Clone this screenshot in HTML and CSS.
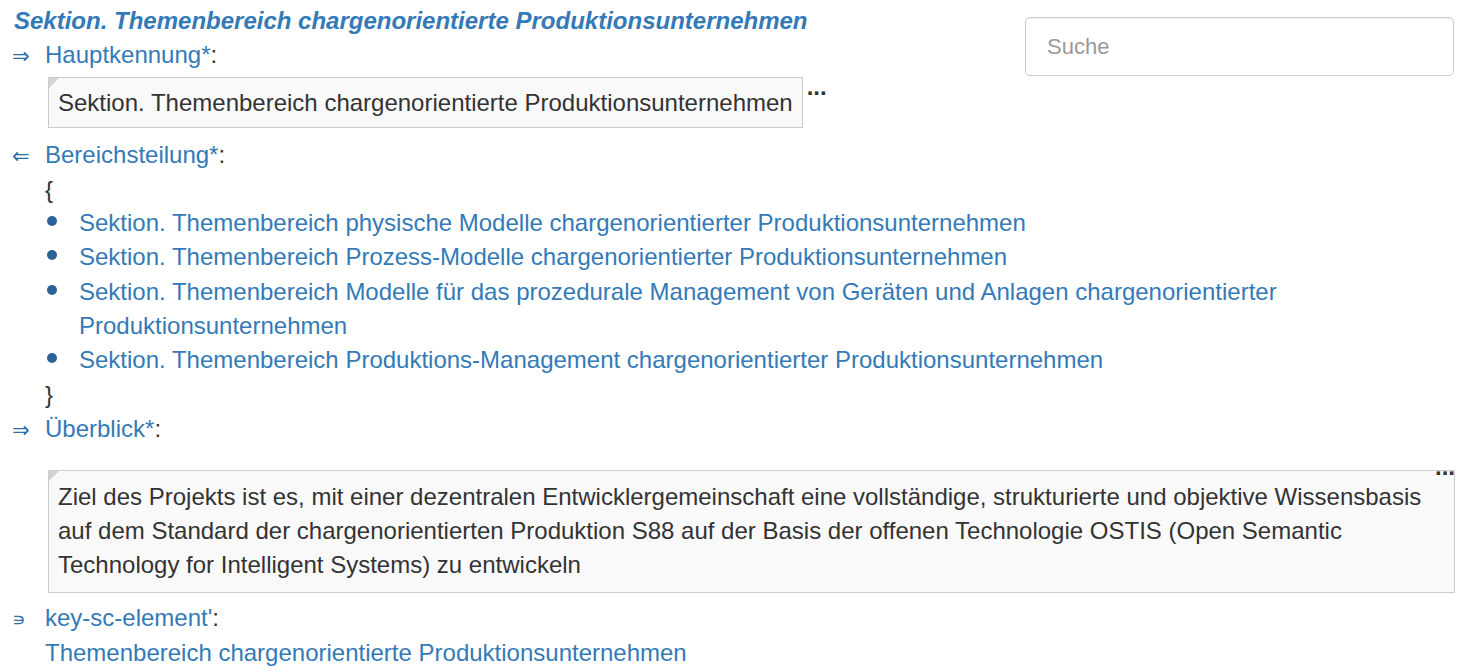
FILE: index.html
```html
<!DOCTYPE html>
<html lang="de">
<head>
<meta charset="utf-8">
<title>Sektion</title>
<link rel="stylesheet" href="styles.css">
</head>
<body>
<div class="page">
  <div class="search"><input type="text" placeholder="Suche"></div>
  <h1 class="title">Sektion. Themenbereich chargenorientierte Produktionsunternehmen</h1>

  <div class="rel"><span class="arrow">&rArr;</span><a class="lnk">Hauptkennung*</a>:</div>
  <div class="val">
    <span class="box">Sektion. Themenbereich chargenorientierte Produktionsunternehmen</span><span class="more">...</span>
  </div>

  <div class="rel"><span class="arrow">&lArr;</span><a class="lnk">Bereichsteilung*</a>:</div>
  <div class="set">
    <div class="brace">{</div>
    <ul class="items">
      <li><a class="lnk">Sektion. Themenbereich physische Modelle chargenorientierter Produktionsunternehmen</a></li>
      <li><a class="lnk">Sektion. Themenbereich Prozess-Modelle chargenorientierter Produktionsunternehmen</a></li>
      <li><a class="lnk">Sektion. Themenbereich Modelle für das prozedurale Management von Geräten und Anlagen chargenorientierter Produktionsunternehmen</a></li>
      <li><a class="lnk">Sektion. Themenbereich Produktions-Management chargenorientierter Produktionsunternehmen</a></li>
    </ul>
    <div class="brace">}</div>
  </div>

  <div class="rel"><span class="arrow">&rArr;</span><a class="lnk">Überblick*</a>:</div>
  <div class="val wide">
    <div class="more-right">...</div>
    <div class="box block">Ziel des Projekts ist es, mit einer dezentralen Entwicklergemeinschaft eine vollständige, strukturierte und objektive Wissensbasis auf dem Standard der chargenorientierten Produktion S88 auf der Basis der offenen Technologie OSTIS (Open Semantic Technology for Intelligent Systems) zu entwickeln</div>
  </div>

  <div class="rel"><span class="arrow small">&#8717;</span><a class="lnk">key-sc-element'</a>:</div>
  <div class="plain"><a class="lnk">Themenbereich chargenorientierte Produktionsunternehmen</a></div>
</div>
</body>
</html>
```

FILE: styles.css
```css
html, body {
  margin: 0;
  padding: 0;
  background: #fff;
}
body {
  font-family: "Liberation Sans", Arial, sans-serif;
  font-size: 24px;
  line-height: 34px;
  color: #333;
}
.page {
  padding: 4px 7px 0 12px;
}
.search {
  float: right;
  margin-top: 13px;
  margin-right: 1px;
}
.search input {
  box-sizing: border-box;
  width: 429px;
  height: 59px;
  border: 1px solid #ccc;
  border-radius: 5px;
  padding: 0 21px;
  font-family: "Liberation Sans", Arial, sans-serif;
  font-size: 22px;
  color: #555;
  box-shadow: inset 0 1px 1px rgba(0,0,0,0.075);
  outline: none;
}
.search input::placeholder {
  color: #999;
}
.title {
  margin: 0 0 0 2px;
  font-size: 24px;
  line-height: 34px;
  font-weight: bold;
  font-style: italic;
  color: #337ab7;
}
.lnk {
  color: #337ab7;
  text-decoration: none;
}
.rel {
  display: flex;
  align-items: baseline;
}
.arrow {
  display: inline-block;
  width: 33px;
  font-family: "DejaVu Sans", sans-serif;
  font-size: 21px;
  color: #2c6ea8;
}
.arrow.small {
  font-size: 19px;
}
.val {
  padding-left: 36px;
  margin-top: 4px;
  margin-bottom: 10px;
}
.box {
  display: inline-block;
  position: relative;
  border: 1px solid #ccc;
  background: #f9f9f9;
  padding: 8px 9px 7px 9px;
  color: #333;
}
.box::before {
  content: "";
  position: absolute;
  left: 0;
  top: 0;
  border-style: solid;
  border-width: 10px 10px 0 0;
  border-color: #d3d3d3 transparent transparent transparent;
}
.box.block {
  display: block;
  padding: 9px 9px 10px 9px;
}
.more {
  display: inline-block;
  vertical-align: top;
  margin-left: 4px;
  font-weight: bold;
  line-height: 20px;
  color: #333;
}
.wide {
  margin-top: 13px;
  margin-bottom: 8px;
}
.more-right {
  position: relative;
  z-index: 1;
  text-align: right;
  font-weight: bold;
  line-height: 14px;
  height: 10px;
}
.set {
  padding-left: 33px;
}
.brace {
  color: #333;
}
.items {
  margin: -1px 0 1px 0;
  padding-left: 34px;
  list-style: none;
}
.items li {
  position: relative;
  line-height: 34.3px;
}
.items li::before {
  content: "";
  position: absolute;
  left: -32px;
  top: 10px;
  width: 10px;
  height: 10px;
  border-radius: 50%;
  background: #2c6396;
}
.plain {
  padding-left: 33px;
}
```
